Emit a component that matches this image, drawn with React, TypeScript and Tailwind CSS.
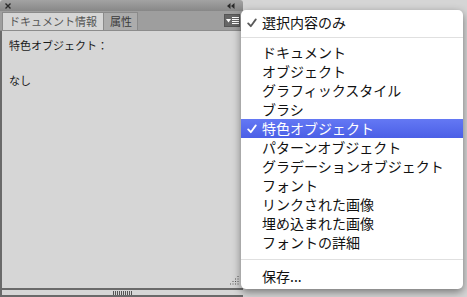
import React from 'react';

const items = [
    'ドキュメント',
    'オブジェクト',
    'グラフィックスタイル',
    'ブラシ',
    '特色オブジェクト',
    'パターンオブジェクト',
    'グラデーションオブジェクト',
    'フォント',
    'リンクされた画像',
    '埋め込まれた画像',
    'フォントの詳細',
];

const font = { fontFamily: '"Noto Sans CJK JP", "Liberation Sans", sans-serif' };

function Check({ white }: { white?: boolean }) {
    return (
        <svg width="10" height="10" viewBox="0 0 10 10" className="shrink-0">
            <path
                d="M1.2 5.4 L3.8 8.2 L8.8 1.4"
                fill="none"
                stroke={white ? '#ffffff' : '#5a5a5a'}
                strokeWidth="1.8"
                strokeLinecap="round"
                strokeLinejoin="round"
            />
        </svg>
    );
}

function MenuRow({ label, checked, active }: { label: string; checked?: boolean; active?: boolean }) {
    return (
        <div
            className={
                active
                    ? 'flex h-[19px] items-center bg-gradient-to-b from-[#6478f4] to-[#4b5fe6] text-white'
                    : 'flex h-[19px] items-center text-[#111]'
            }
        >
            <div className="flex w-[21px] justify-end pr-[5px]">
                {checked && <Check white={active} />}
            </div>
            <span className="relative -top-[1px] text-[14px] leading-none">{label}</span>
        </div>
    );
}

function MenuIcon() {
    return (
        <div className="flex h-[13px] w-[16px] items-center justify-center gap-[1px] bg-[#666] shadow-[inset_0_0_0_1px_#555]">
            <svg width="5" height="4" viewBox="0 0 5 4">
                <path d="M0 0 H5 L2.5 3.5 Z" fill="#fff" />
            </svg>
            <div className="flex flex-col gap-[1px]">
                <div className="h-[1px] w-[7px] bg-white" />
                <div className="h-[1px] w-[7px] bg-white" />
                <div className="h-[1px] w-[7px] bg-white" />
                <div className="h-[1px] w-[7px] bg-white" />
            </div>
        </div>
    );
}

function ResizeDots() {
    const dots: React.ReactNode[] = [];
    for (let r = 0; r < 4; r++) {
        for (let c = 3 - r; c < 4; c++) {
            dots.push(<rect key={`${r}-${c}`} x={c * 2.5} y={r * 2.5} width="1" height="1" fill="#555" />);
        }
    }
    return (
        <svg width="10" height="10" viewBox="0 0 10 10">
            {dots}
        </svg>
    );
}

export default function App() {
    return (
        <div className="relative h-[297px] w-[467px] overflow-hidden bg-[#d5d5d5]" style={font}>
            <div className="flex h-full w-[243px] flex-col">
                {/* title bar */}
                <div className="flex h-[11px] items-center justify-between rounded-t-[3px] bg-gradient-to-b from-[#a3a3a3] to-[#878787] px-[5px]">
                    <svg width="6" height="6" viewBox="0 0 6 6">
                        <path d="M0.5 0.5 L5.5 5.5 M5.5 0.5 L0.5 5.5" stroke="#2a2a2a" strokeWidth="1.4" />
                    </svg>
                    <svg width="8" height="6" viewBox="0 0 8 6" className="mr-[3px]">
                        <path d="M3.5 0 V6 L0 3 Z M7.5 0 V6 L4 3 Z" fill="#2a2a2a" />
                    </svg>
                </div>
                {/* tabs */}
                <div className="flex h-[20px] items-end border-b border-[#8c8c8c] bg-[#9e9e9e] pl-[2px]">
                    <div className="flex h-[18px] w-[101px] items-center border-l border-t border-[#8a8a8a] bg-[#d6d6d6] pl-[6px] text-[11px] text-[#555]">
                        ドキュメント情報
                    </div>
                    <div className="flex h-[18px] w-[35px] items-center border-x border-t border-[#8a8a8a] bg-[#acacac] pl-[6px] text-[11px] text-[#3a3a3a]">
                        属性
                    </div>
                    <div className="flex h-full flex-1 items-center justify-end pr-[3px]">
                        <MenuIcon />
                    </div>
                </div>
                {/* content */}
                <div className="flex flex-1 flex-col border-l-2 border-[#6a6a6a] bg-[#d6d6d6] pl-[7px] pt-[7px] text-[11px] leading-[15px] text-[#1a1a1a]">
                    <div>特色オブジェクト：</div>
                    <div className="mt-[20px]">なし</div>
                    <div className="mt-auto flex justify-end pb-[2px] pr-[3px]">
                        <ResizeDots />
                    </div>
                </div>
                {/* bottom grip */}
                <div className="flex h-[9px] items-center justify-center border-y-2 border-l-2 border-[#6a6a6a] bg-[#d6d6d6]">
                    <div className="flex gap-[1px]">
                        {Array.from({ length: 10 }).map((_, i) => (
                            <div key={i} className="h-[4px] w-[1px] bg-[#555]" />
                        ))}
                    </div>
                </div>
            </div>

            {/* popup menu */}
            <div className="absolute left-[241px] top-[10px] w-[222px] rounded-[5px] bg-white pb-[3px] pt-[3px] shadow-[0_3px_8px_rgba(0,0,0,0.45)]">
                <MenuRow label="選択内容のみ" checked />
                <div className="my-[5px] h-[1px] bg-[#e0e0e0]" />
                {items.map((label) => (
                    <MenuRow
                        key={label}
                        label={label}
                        checked={label === '特色オブジェクト'}
                        active={label === '特色オブジェクト'}
                    />
                ))}
                <div className="my-[7px] h-[1px] bg-[#e0e0e0]" />
                <MenuRow label="保存..." />
            </div>
        </div>
    );
}
